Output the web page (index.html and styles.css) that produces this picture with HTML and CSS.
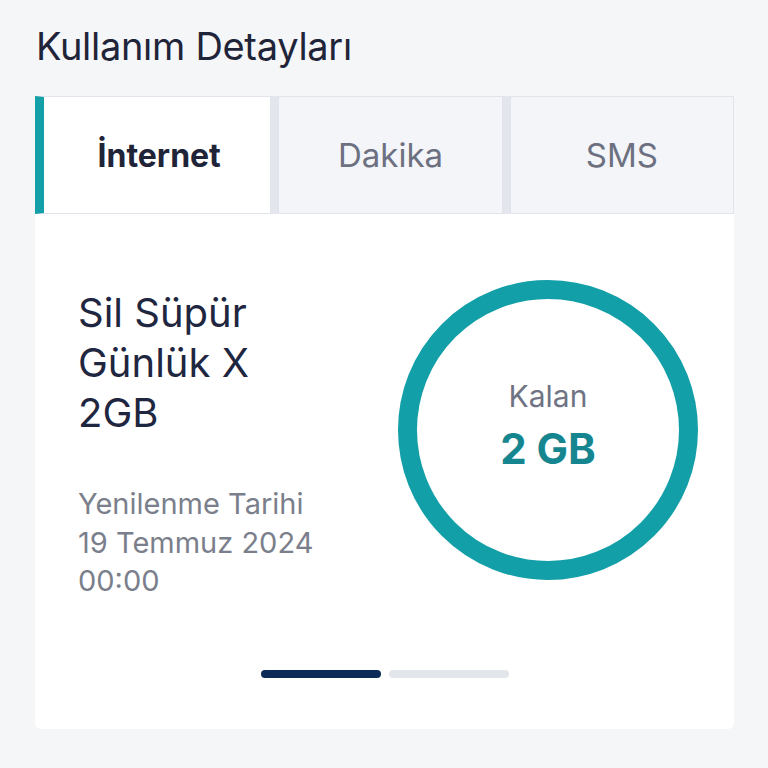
FILE: index.html
```html
<!DOCTYPE html>
<html lang="tr">
<head>
  <meta charset="UTF-8">
  <title>Kullanım Detayları</title>
  <link rel="stylesheet" href="styles.css">
</head>
<body>

  <h1 class="page-title">Kullanım Detayları</h1>

  <div class="usage">
    <div class="tabs">
      <div class="tab active">İnternet</div>
      <div class="tab">Dakika</div>
      <div class="tab">SMS</div>
    </div>

    <div class="card">
      <div class="card-body">
        <div class="package">
          <div class="package-name">Sil Süpür Günlük X 2GB</div>
          <div class="renewal">
            <div class="renewal-label">Yenilenme Tarihi</div>
            <div>19 Temmuz 2024 00:00</div>
          </div>
        </div>

        <div class="ring">
          <svg width="300" height="300" viewBox="0 0 300 300">
            <circle cx="150" cy="150" r="140.5" fill="none" stroke="#139fa8" stroke-width="19"/>
          </svg>
          <div class="ring-text">
            <div class="ring-label">Kalan</div>
            <div class="ring-value">2 GB</div>
          </div>
        </div>
      </div>

      <div class="pager">
        <span class="dot current"></span>
        <span class="dot"></span>
      </div>
    </div>
  </div>

</body>
</html>
```

FILE: styles.css
```css
body { margin: 0; background: #f5f6f8; font-family: Inter, "Noto Sans", sans-serif; color: #1f2438; }

.page-title { margin: 0; padding: 23px 36px 0; font-size: 38px; font-weight: 400; line-height: 46px; letter-spacing: -0.3px; }

.usage { margin: 27px 34px 0 35px; }

.tabs { display: flex; gap: 7px; background: #e3e6ec; height: 118px; }
.tab { flex: 1; display: flex; align-items: center; justify-content: center; background: #f3f5f8; border: 1px solid #e1e4ea; font-size: 33px; color: #6c7080; }
.tab.active { background: #fff; border-left: 9px solid #13a0a8; color: #1f2438; font-weight: 700; font-size: 32px; padding-left: 4px; }

.card { background: #fff; border-radius: 0 0 6px 6px; padding: 66px 36px 51px; }
.card-body { display: flex; justify-content: space-between; align-items: flex-start; }

.package { width: 270px; padding-top: 8px; margin-left: 7px; }
.package-name { font-size: 40px; line-height: 50px; width: 230px; color: #1f2640; }
.renewal { margin-top: 47px; font-size: 29px; line-height: 38px; color: #7b7f8c; }
.renewal-label { margin-bottom: 1px; }

.ring { position: relative; width: 300px; height: 300px; }
.ring svg { display: block; }
.ring-text { position: absolute; inset: 0; display: flex; flex-direction: column; align-items: center; justify-content: center; padding-bottom: 8px; }
.ring-label { font-size: 30px; color: #6f7383; line-height: 36px; margin-bottom: 9px; }
.ring-value { font-size: 42px; font-weight: 700; color: #15868f; line-height: 52px; }

.pager { display: flex; justify-content: center; gap: 8px; margin-top: 70px; }
.dot { width: 120px; height: 8px; border-radius: 4px; background: #e2e5ea; }
.dot.current { background: #0d2b57; }
```
